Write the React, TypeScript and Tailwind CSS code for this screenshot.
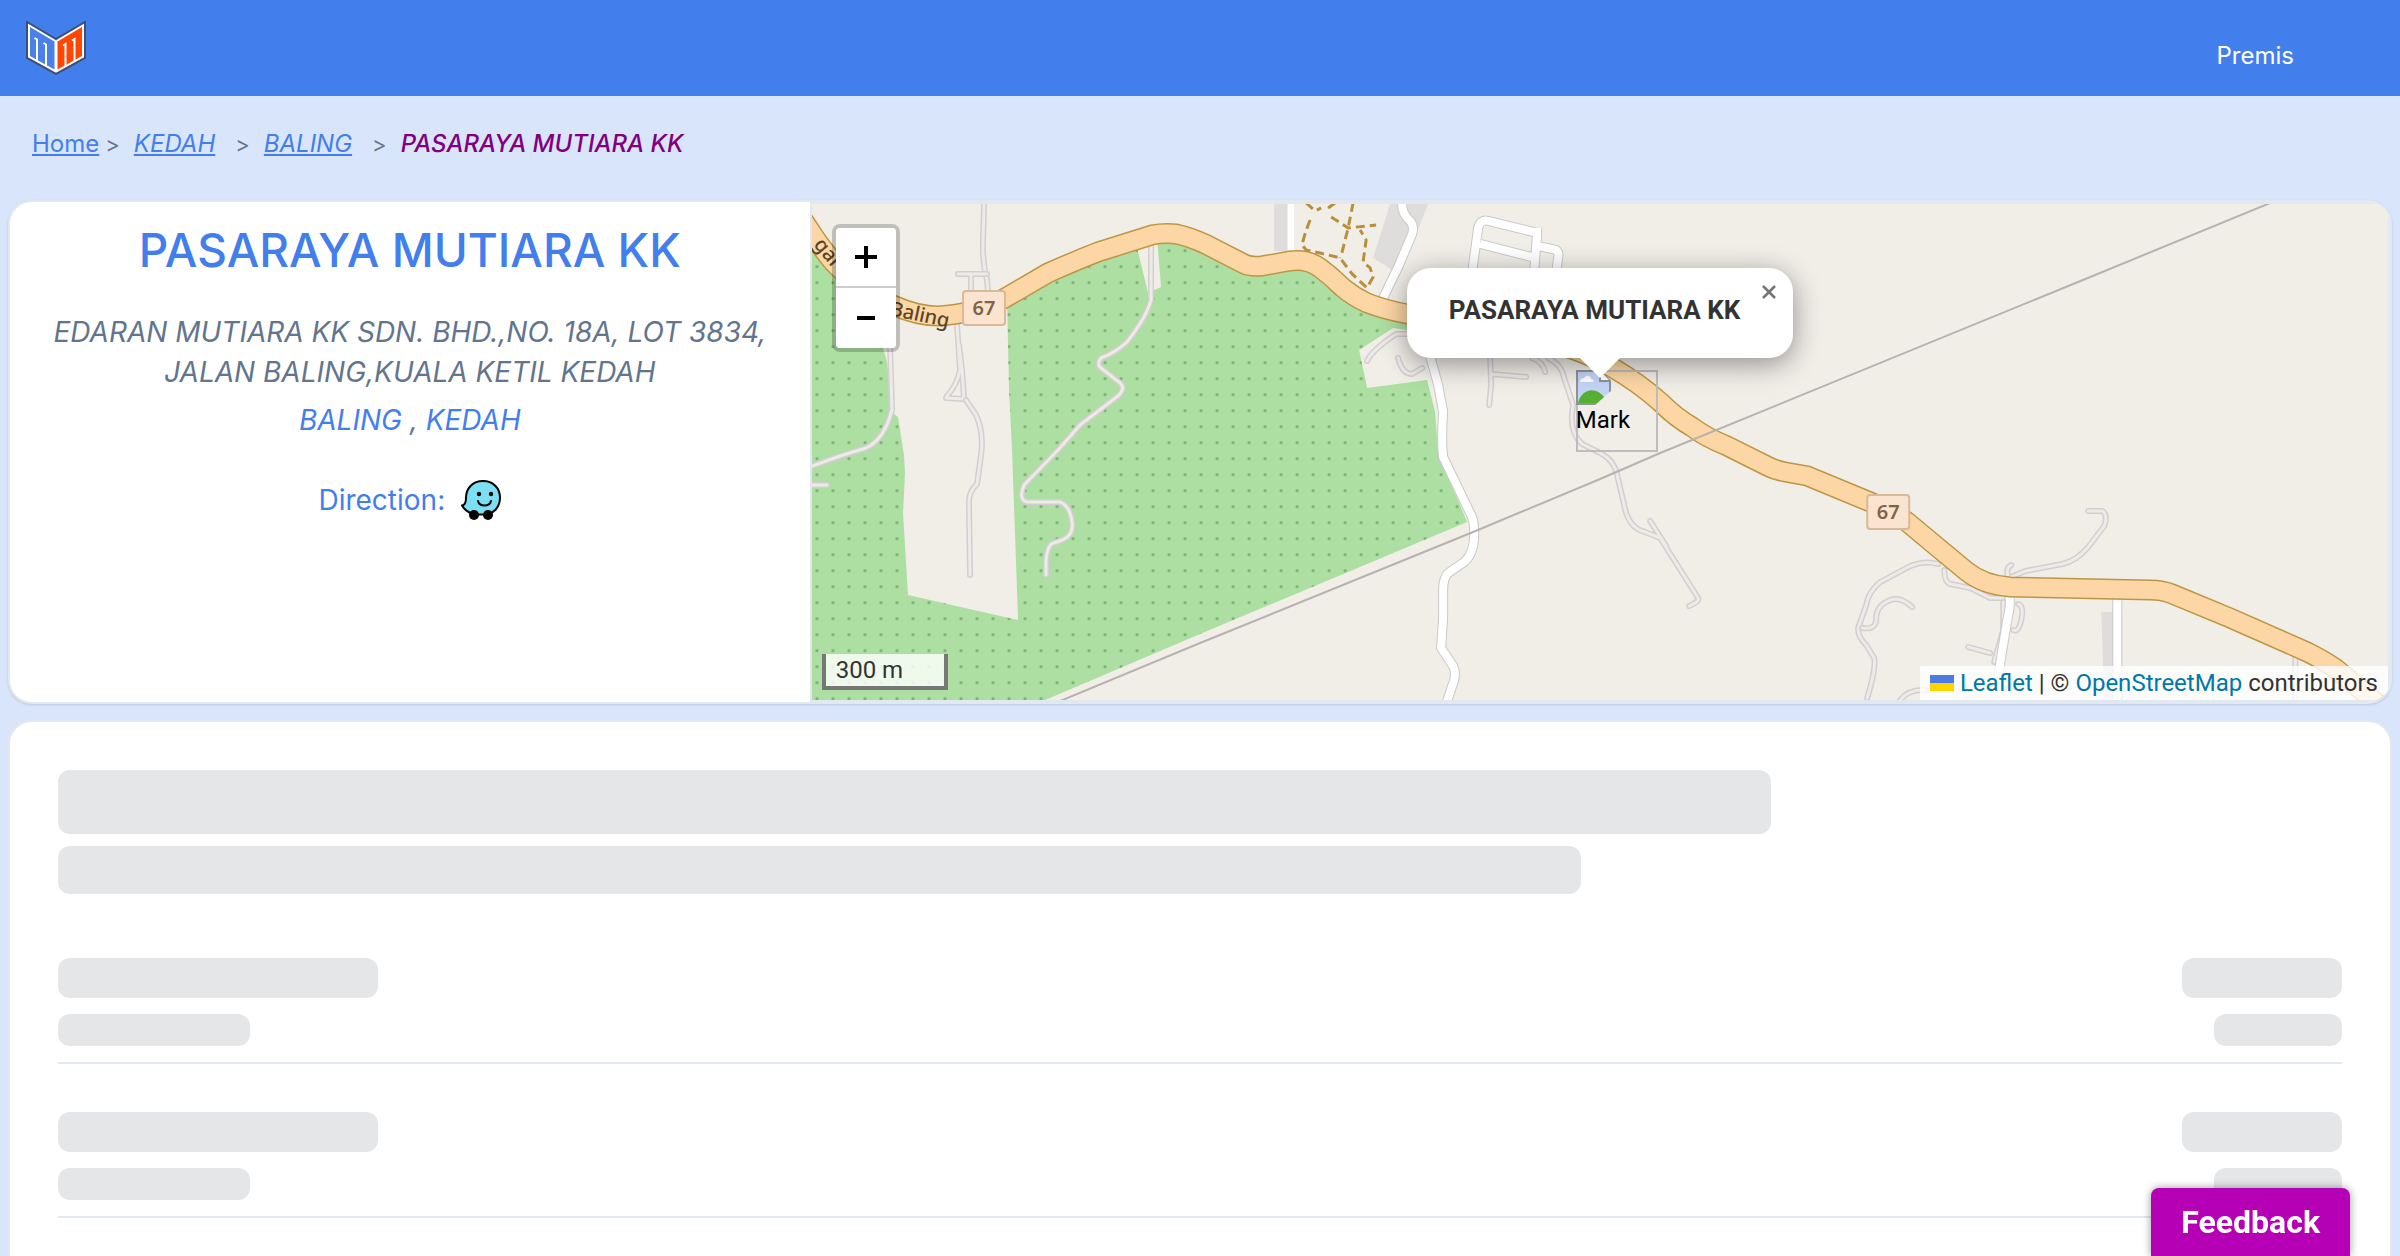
import clsx from 'clsx';

interface Crumb {
  label: string;
  href: string;
  italic: boolean;
}

const crumbs: Crumb[] = [
  { label: 'Home', href: '#home', italic: false },
  { label: 'KEDAH', href: '#kedah', italic: true },
  { label: 'BALING', href: '#baling', italic: true },
];

const SKELETON_ROWS = [1, 2, 3, 4];

const MAIN_ROAD =
  'M800 215 Q815 240 833 262 Q862 292 895 306 Q918 316 938 316 Q975 314 1005 298 L1048 273 Q1075 261 1098 252 L1152 235 Q1163 233 1176 234 Q1190 237 1205 244 L1244 264 Q1250 267 1262 266 L1290 261 Q1308 259 1320 268 Q1332 277 1343 288 Q1354 297 1367 303 Q1385 310 1407 314 L1500 330 Q1575 345 1613 368 Q1640 384 1660 402 Q1676 418 1692 427 Q1705 437 1727 446 L1769 467 Q1775 470 1785 472 L1807 476 L1870 502 Q1890 510 1907 522 L1937 547 L1966 571 Q1983 585 2010 587 L2150 590 Q2162 590 2172 594 L2230 618 L2307 652 Q2325 661 2336 669 Q2362 690 2392 717';

const GREEN =
  'M812 240 L850 290 L883 348 L887 362 L893 413 L898 417 L904 455 L905 473 L903 513 L908 595 L1018 620 L1012 450 L1009 390 L1007 300 L1048 273 L1098 252 L1138 242 L1138 252 L1148 293 L1161 287 L1157 240 L1176 234 L1205 244 L1250 266 L1307 261 L1343 292 L1367 303 L1407 314 L1407 330 L1393 328 L1359 350 L1367 388 L1427 380 L1435 412 L1438 453 L1467 522 L1200 634 L1045 700 L812 700 Z';

// thin service ways, drawn as a grey casing with a pale core
const TRACKS = [
  'M890 345 L892 410 Q884 440 866 448 L840 456 L812 466',
  'M812 485 H827',
  'M984 204 L983 240 Q982 262 987 280 L988 292',
  'M958 274 H987 M971 274 V292',
  'M957 325 L960 370 Q957 385 947 396 L946 398 L964 399 L962 370 L959 345',
  'M966 400 L976 415 Q984 432 981 455 L977 484 Q968 492 969 505 L970 575',
  'M1151 246 L1151 300 Q1146 318 1127 342 Q1115 353 1101 358 Q1096 364 1101 368 L1120 383 Q1126 388 1118 396 L1080 425 L1058 450 L1024 485 Q1018 500 1027 502 L1060 502 Q1070 506 1072 522 Q1074 535 1062 540 L1051 544 Q1047 549 1046 560 V575',
  'M1367 361 Q1372 350 1396 334 L1407 334',
  'M1398 358 Q1402 374 1412 374 L1422 368',
  'M1490 358 L1491 385 L1489 405 M1491 374 L1526 377',
  'M1532 358 Q1543 362 1545 372 M1548 358 Q1562 365 1564 378 L1573 405 Q1568 432 1582 444 L1600 453 Q1614 460 1617 475 L1624 505 Q1628 528 1645 532 L1660 538 L1698 598 Q1700 601 1689 606 M1650 521 L1666 546',
  'M1938 564 Q1925 560 1910 566 L1880 582 Q1868 592 1866 605 L1858 628 Q1857 636 1866 645 L1874 658 Q1876 668 1867 698',
  'M1862 628 Q1875 630 1876 620 Q1875 606 1890 600 Q1900 596 1912 607',
  'M1944 570 Q1944 582 1950 584 L1970 588 L1990 598 L2003 598',
  'M2088 511 L2102 511 Q2108 515 2104 526 L2088 547 Q2076 561 2062 564 L2025 571 L2008 578 Q2005 568 2011 565',
  'M2018 604 Q2024 606 2021 620 Q2018 633 2013 630 M2003 602 V630 L1994 662 M1968 647 L1990 653 M1900 700 Q1908 689 1925 690',
  'M2295 655 V700',
];

const STREETS = [
  'M1430 356 L1438 385 L1443 412 Q1441 440 1443 457 L1469 511 Q1474 519 1474 530 Q1475 553 1464 562 L1448 573 Q1443 578 1443 590 L1443 617 L1441 648 L1453 666 Q1456 672 1454 680 L1446 704',
  'M1402 200 Q1401 212 1408 219 Q1415 225 1412 234 L1399 265 L1383 298',
  'M1472 272 L1478 228 Q1480 219 1488 221 L1537 233 L1534 272 M1480 244 L1535 258 M1537 246 L1556 250 Q1559 252 1558 258 L1556 272 M1537 240 V228',
  'M2009 596 Q2011 603 2007 620 L1998 675',
  'M2117 598 V700',
];

const DASHED =
  'M1306 203 L1315 211 L1321 208 M1310 220 Q1304 235 1302 245 L1306 250 L1320 253 L1340 258 L1352 274 L1367 288 L1373 277 L1370 268 L1363 262 L1366 240 L1360 230 M1353 203 L1348 228 L1342 252 L1340 258 M1328 208 L1335 203 M1331 217 L1348 228 L1376 225';

function Logo() {
  return (
    <svg viewBox="0 0 60 54" className="h-[54px] w-[60px]" aria-hidden="true">
      <path d="M1 1 L30 18 L59 1 V37 L30 53 L1 37 Z" fill="#fff" stroke="#3d4f78" strokeWidth="2" />
      <path d="M4 6 L28.500 20.500 V48.500 L4 35 Z" fill="#4a80ea" />
      <path d="M56 6 L31.500 20.500 V48.500 L56 35 Z" fill="#ff4605" />
      <path d="M8.500 17 L11 18.500 V40 M17.500 22 L20 23.500 V45" stroke="#fff" strokeWidth="2" fill="none" />
      <path d="M37 24.500 L39.500 23 V45 M46 19.500 L48.500 18 V40" stroke="#fff" strokeWidth="2" fill="none" />
    </svg>
  );
}

function WazeIcon() {
  return (
    <svg viewBox="0 0 40 40" className="size-10" aria-hidden="true">
      <path
        d="M22 1 C32 1 39 8 39 17.500 C39 28 32 34.500 22 34.500 H14 C8 33 3 29 1 25.500 C4 25 5 22.500 5 18 C5 8 12 1 22 1 Z"
        fill="#7ddff3"
        stroke="#000"
        strokeWidth="2"
      />
      <circle cx="18" cy="14" r="2.200" />
      <circle cx="30" cy="14" r="2.200" />
      <path d="M17 21 C18.500 27 28.500 27 30 21" fill="none" stroke="#000" strokeWidth="2" strokeLinecap="round" />
      <circle cx="13" cy="35" r="5" />
      <circle cx="27" cy="35" r="5" />
    </svg>
  );
}

function Shield({ x, y }: { x: number; y: number }) {
  return (
    <g>
      <rect x={x} y={y} width="42" height="34" rx="3" fill="#fae4d0" stroke="#d9b998" strokeWidth="2" />
      <text x={x + 21} y={y + 24} textAnchor="middle" fontSize="20" fontWeight="600" fill="#806448">
        67
      </text>
    </g>
  );
}

function MapTiles() {
  return (
    <svg
      viewBox="812 204 1576 496"
      preserveAspectRatio="xMidYMid slice"
      className="absolute inset-0 size-full font-['Noto_Sans',sans-serif]"
      aria-hidden="true"
    >
      <defs>
        <pattern id="orchard" width="16" height="16" x="809" y="258.700" patternUnits="userSpaceOnUse">
          <circle cx="8" cy="8" r="1.600" fill="#7bb274" />
        </pattern>
      </defs>
      <rect x="812" y="204" width="1576" height="496" fill="#f1eee8" />
      <path d={GREEN} fill="#addfa2" />
      <path d={GREEN} fill="url(#orchard)" />
      <path d="M1274 204 H1287 V251 H1274 Z M1390 204 H1428 L1400 275 L1373 258 Z M2101 612 H2122 V700 H2104 Z" fill="#dedddc" />
      {TRACKS.map((d) => (
        <g key={d} fill="none" strokeLinecap="round" strokeLinejoin="round">
          <path d={d} stroke="#d3cecf" strokeWidth="6" />
          <path d={d} stroke="#eeeae8" strokeWidth="3" />
        </g>
      ))}
      {STREETS.map((d) => (
        <g key={d} fill="none" strokeLinejoin="round">
          <path d={d} stroke="#cbc9c8" strokeWidth="10" />
          <path d={d} stroke="#fff" strokeWidth="8" />
        </g>
      ))}
      <path d="M1291 204 V256" stroke="#fff" strokeWidth="6" />
      <path d={DASHED} fill="none" stroke="#b98f3c" strokeWidth="3" strokeDasharray="9 5" />
      <path d={MAIN_ROAD} fill="none" stroke="#bd9645" strokeWidth="21" />
      <path d={MAIN_ROAD} fill="none" stroke="#fcd6a4" strokeWidth="18" />
      <path d="M1060 701 L1200 643 L1473 532 L1600 479 L1660 453 L2090 277 L2270 203" fill="none" stroke="#b7b2b1" strokeWidth="2" />
      <g fontSize="20" fontWeight="500" fill="#5a4528">
        <text transform="translate(813 245) rotate(50)">gai K</text>
        <text transform="translate(889 315) rotate(12)">Baling</text>
      </g>
      <Shield x={963} y={291} />
      <Shield x={1867} y={495} />
    </svg>
  );
}

function BrokenMarker() {
  return (
    <div className="absolute top-[166px] left-1/2 -ml-6 size-[82px] text-2xl leading-7 text-black inset-ring-2 inset-ring-[#bdbdbd]">
      <svg viewBox="0 0 36 36" className="size-9" aria-hidden="true">
        <path d="M1 1 H24 L34 11 V34 H1 Z" fill="#c3d5f5" stroke="#8d9499" strokeWidth="2" />
        <path d="M4 12 C4 8 8 9 9 7 C12 4 15 7 15 9 C18 9 18 12 17 12 Z" fill="#fff" />
        <path d="M2 33 C5 20 20 14 30 30 V33 Z" fill="#55b030" />
        <path d="M18 36 L36 20 V36 Z" fill="#f1eee8" />
        <path d="M24 1 V11 H34" fill="#fff" stroke="#8d9499" strokeWidth="2" />
      </svg>
      <span className="block whitespace-nowrap">Mark</span>
    </div>
  );
}

function MapPopup() {
  return (
    <div className="absolute top-16 left-1/2 w-[386px] -translate-x-1/2">
      <div className="relative rounded-3xl bg-white pt-[22px] pr-12 pb-7 pl-[42px] shadow-[0_6px_28px_rgba(0,0,0,0.4)]">
        <p className="text-[26px] leading-10 font-bold whitespace-nowrap text-[#333]">PASARAYA MUTIARA KK</p>
        <button type="button" aria-label="Close popup" className="absolute top-0 right-0 flex size-12 items-center justify-center text-[#757575]">
          <svg viewBox="0 0 14 14" className="size-3.5" aria-hidden="true">
            <path d="M1 1 L13 13 M13 1 L1 13" stroke="currentColor" strokeWidth="2.600" />
          </svg>
        </button>
      </div>
      <svg viewBox="0 0 40 20" className="relative mx-auto h-5 w-10" aria-hidden="true">
        <path d="M0 0 H40 L20 20 Z" fill="#fff" />
      </svg>
    </div>
  );
}

function PremiseMap() {
  return (
    <div className="relative min-w-0 flex-1 overflow-hidden border-2 border-slate-200 font-[Roboto,sans-serif]">
      <MapTiles />
      <BrokenMarker />
      <MapPopup />
      <div className="absolute top-5 left-5 flex flex-col overflow-hidden rounded-lg border-4 border-black/20 bg-clip-padding">
        <button type="button" aria-label="Zoom in" className="flex size-[60px] items-center justify-center border-b-2 border-[#ccc] bg-white">
          <svg viewBox="0 0 22 22" className="size-[22px]" aria-hidden="true">
            <path d="M11 0 V22 M0 11 H22" stroke="#000" strokeWidth="4" />
          </svg>
        </button>
        <button type="button" aria-label="Zoom out" className="flex size-[60px] items-center justify-center bg-white">
          <svg viewBox="0 0 22 22" className="size-[22px]" aria-hidden="true">
            <path d="M2 11 H20" stroke="#000" strokeWidth="4" />
          </svg>
        </button>
      </div>
      <div className="absolute bottom-2.5 left-2.5 w-[126px] border-4 border-t-0 border-[#777] bg-white/80 px-2.5 text-2xl leading-8 text-[#333]">
        300 m
      </div>
      <div className="absolute right-0 bottom-0 flex items-center bg-white/80 px-2.5 text-2xl leading-[34px] whitespace-pre text-[#333]">
        <svg viewBox="0 0 12 8" className="mr-1.5 h-4 w-6" aria-hidden="true">
          <path fill="#4c7be1" d="M0 0h12v4H0z" />
          <path fill="#ffd500" d="M0 4h12v4H0z" />
        </svg>
        <a href="#leaflet" className="text-[#0078a8]">Leaflet</a>
        <span> | © </span>
        <a href="#osm" className="text-[#0078a8]">OpenStreetMap</a>
        <span> contributors</span>
      </div>
    </div>
  );
}

function Bar({ className }: { className: string }) {
  return <div className={clsx('rounded-xl bg-[#e5e6e8]', className)} />;
}

export default function App() {
  return (
    <div className="flex h-screen flex-col overflow-hidden bg-[#d9e5fb] font-[Inter,sans-serif] text-slate-500">
      <header className="flex h-24 shrink-0 items-center justify-between bg-[#427eec] pr-[106px] pl-[26px]">
        <a href="#home" aria-label="Home">
          <Logo />
        </a>
        <nav className="pt-4">
          <a href="#premis" className="text-2xl text-white">Premis</a>
        </nav>
      </header>

      <nav aria-label="Breadcrumb" className="shrink-0 px-8 py-8">
        <ol className="flex items-center text-2xl leading-8">
          {crumbs.map((crumb) => (
            <li key={crumb.label} className="flex items-center">
              <a href={crumb.href} className={clsx('text-[#427eec] underline', crumb.italic ? 'mr-5 italic' : 'mr-1.5')}>
                {crumb.label}
              </a>
              <span aria-hidden="true" className="mr-3.5 text-[22px]">&gt;</span>
            </li>
          ))}
          <li aria-current="page" className="font-medium text-[#800080] italic">PASARAYA MUTIARA KK</li>
        </ol>
      </nav>

      <main className="flex flex-col gap-4 px-2 pt-2">
        <section className="flex min-h-[504px] shrink-0 overflow-hidden rounded-3xl border-2 border-slate-200 bg-white shadow-sm">
          <div className="w-[33.6%] px-8 pt-[18px] text-center">
            <h1 className="text-[46px] leading-[60px] font-medium text-[#427eec]">PASARAYA MUTIARA KK</h1>
            <address className="mt-8 text-[28px] leading-10">
              <p>EDARAN MUTIARA KK SDN. BHD.,NO. 18A, LOT 3834, JALAN BALING,KUALA KETIL KEDAH</p>
              <p className="mt-2">
                <a href="#baling" className="text-[#427eec]">BALING</a> , <a href="#kedah" className="text-[#427eec]">KEDAH</a>
              </p>
            </address>
            <div className="mt-10 flex items-center justify-center gap-4 text-[28px] leading-10 text-[#427eec]">
              <span>Direction:</span>
              <a href="#waze" aria-label="Open in Waze">
                <WazeIcon />
              </a>
            </div>
          </div>
          <PremiseMap />
        </section>

        <section aria-label="Loading items" className="shrink-0 rounded-3xl border-2 border-slate-200 bg-white p-12">
          <Bar className="h-16 w-3/4" />
          <Bar className="mt-3 mb-4 h-12 w-2/3" />
          {SKELETON_ROWS.map((row) => (
            <div key={row} className="flex justify-between border-b-2 border-slate-200 pt-12 pb-4">
              <div className="flex flex-col gap-4">
                <Bar className="h-10 w-80" />
                <Bar className="h-8 w-48" />
              </div>
              <div className="flex flex-col items-end gap-4">
                <Bar className="h-10 w-40" />
                <Bar className="h-8 w-32" />
              </div>
            </div>
          ))}
        </section>
      </main>

      <button
        type="button"
        className="fixed right-[50px] bottom-0 h-[68px] rounded-t-lg bg-[#b500b5] px-[30px] font-[Roboto,sans-serif] text-[32px] font-bold text-white shadow-[0_0_8px_rgba(0,0,0,0.4)]"
      >
        Feedback
      </button>
    </div>
  );
}
